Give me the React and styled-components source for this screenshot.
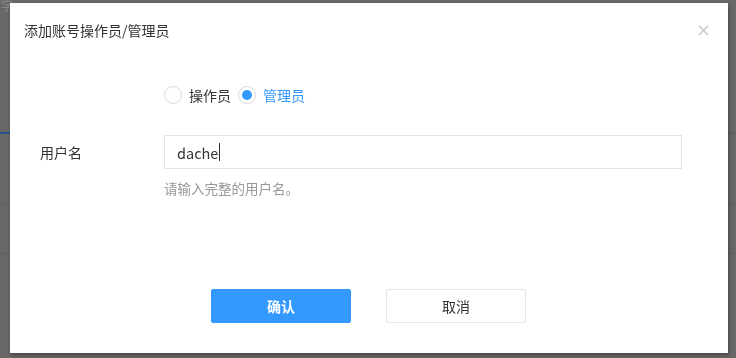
import React from "react";
import styled, { createGlobalStyle } from "styled-components";

const GlobalStyle = createGlobalStyle`
  html, body { margin: 0; padding: 0; }
  body {
    background: #686868;
    font-family: "Noto Sans CJK SC", "Noto Sans", "Liberation Sans", sans-serif;
    width: 736px;
    height: 358px;
    overflow: hidden;
  }
`;

const Backdrop = styled.div`
  width: 736px;
  height: 358px;
  display: flex;
  flex-direction: column;
`;

const BackHeader = styled.div`
  height: 20px;
  font-size: 12px;
  line-height: 12px;
  color: #8a8a8a;
  padding-left: 1px;
`;

const BackSpace = styled.div`
  height: ${(p) => p.$h}px;
  flex-shrink: 0;
`;

const BackLine = styled.div`
  height: ${(p) => p.$h}px;
  flex-shrink: 0;
  background: ${(p) =>
    p.$accent
      ? "linear-gradient(to right, #23558a 0, #23558a 200px, #606060 200px)"
      : "#606060"};
`;

const Modal = styled.div`
  position: fixed;
  left: 10px;
  top: 3px;
  width: 718px;
  height: 350px;
  background: #fff;
  box-shadow: 1px 2px 4px rgba(0, 0, 0, 0.35);
  display: flex;
  flex-direction: column;
  box-sizing: border-box;
`;

const Header = styled.div`
  height: 54px;
  padding: 0 19px 0 14px;
  display: flex;
  align-items: center;
  justify-content: space-between;
`;

const Title = styled.div`
  font-size: 14px;
  color: #333;
  line-height: 20px;
`;

const Close = styled.div`
  width: 12px;
  height: 12px;
  display: flex;
  align-items: center;
  justify-content: center;
`;

const Body = styled.div`
  display: flex;
  flex-direction: column;
  padding-left: 30px;
`;

const FormRow = styled.div`
  display: flex;
  align-items: ${(p) => p.$align || "center"};
  margin-top: ${(p) => p.$mt || 0}px;
`;

const Label = styled.div`
  width: 124px;
  flex-shrink: 0;
  font-size: 14px;
  color: #333;
  line-height: 34px;
`;

const RadioGroup = styled.div`
  display: flex;
  align-items: center;
  height: 24px;
  gap: 7px;
`;

const RadioOption = styled.label`
  display: flex;
  align-items: center;
  gap: 7px;
  font-size: 14px;
  color: ${(p) => (p.$checked ? "#3399ff" : "#333")};
  line-height: 20px;
`;

const RadioCircle = styled.span`
  width: 18px;
  height: 18px;
  box-sizing: border-box;
  border: 1px solid #dcdcdc;
  border-radius: 50%;
  display: flex;
  align-items: center;
  justify-content: center;
  background: #fff;
  &::after {
    content: "";
    width: 10px;
    height: 10px;
    border-radius: 50%;
    background: #3399ff;
    display: ${(p) => (p.$checked ? "block" : "none")};
  }
`;

const Field = styled.div`
  display: flex;
  flex-direction: column;
`;

const InputBox = styled.div`
  width: 518px;
  height: 34px;
  box-sizing: border-box;
  border: 1px solid #e3e3e3;
  padding: 0 12px;
  display: flex;
  align-items: center;
  font-size: 14.5px;
  color: #333;
`;

const Caret = styled.span`
  display: inline-block;
  width: 1px;
  height: 18px;
  background: #333;
  margin-left: 1px;
`;

const Hint = styled.div`
  margin-top: 9px;
  font-size: 13.5px;
  line-height: 20px;
  color: #999;
`;

const Footer = styled.div`
  margin-top: auto;
  padding: 0 1px 30px 0;
  display: flex;
  justify-content: center;
  gap: 35px;
`;

const Button = styled.button`
  width: 140px;
  height: 34px;
  box-sizing: border-box;
  border-radius: 2px;
  font-family: inherit;
  font-size: 14px;
  cursor: pointer;
  border: 1px solid ${(p) => (p.$primary ? "#3399ff" : "#e6e6e6")};
  background: ${(p) => (p.$primary ? "#3399ff" : "#fff")};
  color: ${(p) => (p.$primary ? "#fff" : "#333")};
  font-weight: ${(p) => (p.$primary ? 700 : 400)};
  padding: 0;
`;

export default function App() {
  return (
    <>
      <GlobalStyle />
      <Backdrop>
        <BackHeader>字</BackHeader>
        <BackSpace $h={112} />
        <BackLine $h={2} $accent />
        <BackSpace $h={70} />
        <BackLine $h={1} />
        <BackSpace $h={48} />
        <BackLine $h={1} />
      </Backdrop>
      <Modal>
        <Header>
          <Title>添加账号操作员/管理员</Title>
          <Close>
            <svg width="11" height="11" viewBox="0 0 11 11">
              <path d="M1 1L10 10M10 1L1 10" stroke="#c4c4c4" strokeWidth="1.4" />
            </svg>
          </Close>
        </Header>
        <Body>
          <FormRow $mt={26}>
            <Label />
            <RadioGroup>
              <RadioOption>
                <RadioCircle />
                操作员
              </RadioOption>
              <RadioOption $checked>
                <RadioCircle $checked />
                管理员
              </RadioOption>
            </RadioGroup>
          </FormRow>
          <FormRow $mt={28} $align="flex-start">
            <Label>用户名</Label>
            <Field>
              <InputBox>
                dache
                <Caret />
              </InputBox>
              <Hint>请输入完整的用户名。</Hint>
            </Field>
          </FormRow>
        </Body>
        <Footer>
          <Button $primary>确认</Button>
          <Button>取消</Button>
        </Footer>
      </Modal>
    </>
  );
}
